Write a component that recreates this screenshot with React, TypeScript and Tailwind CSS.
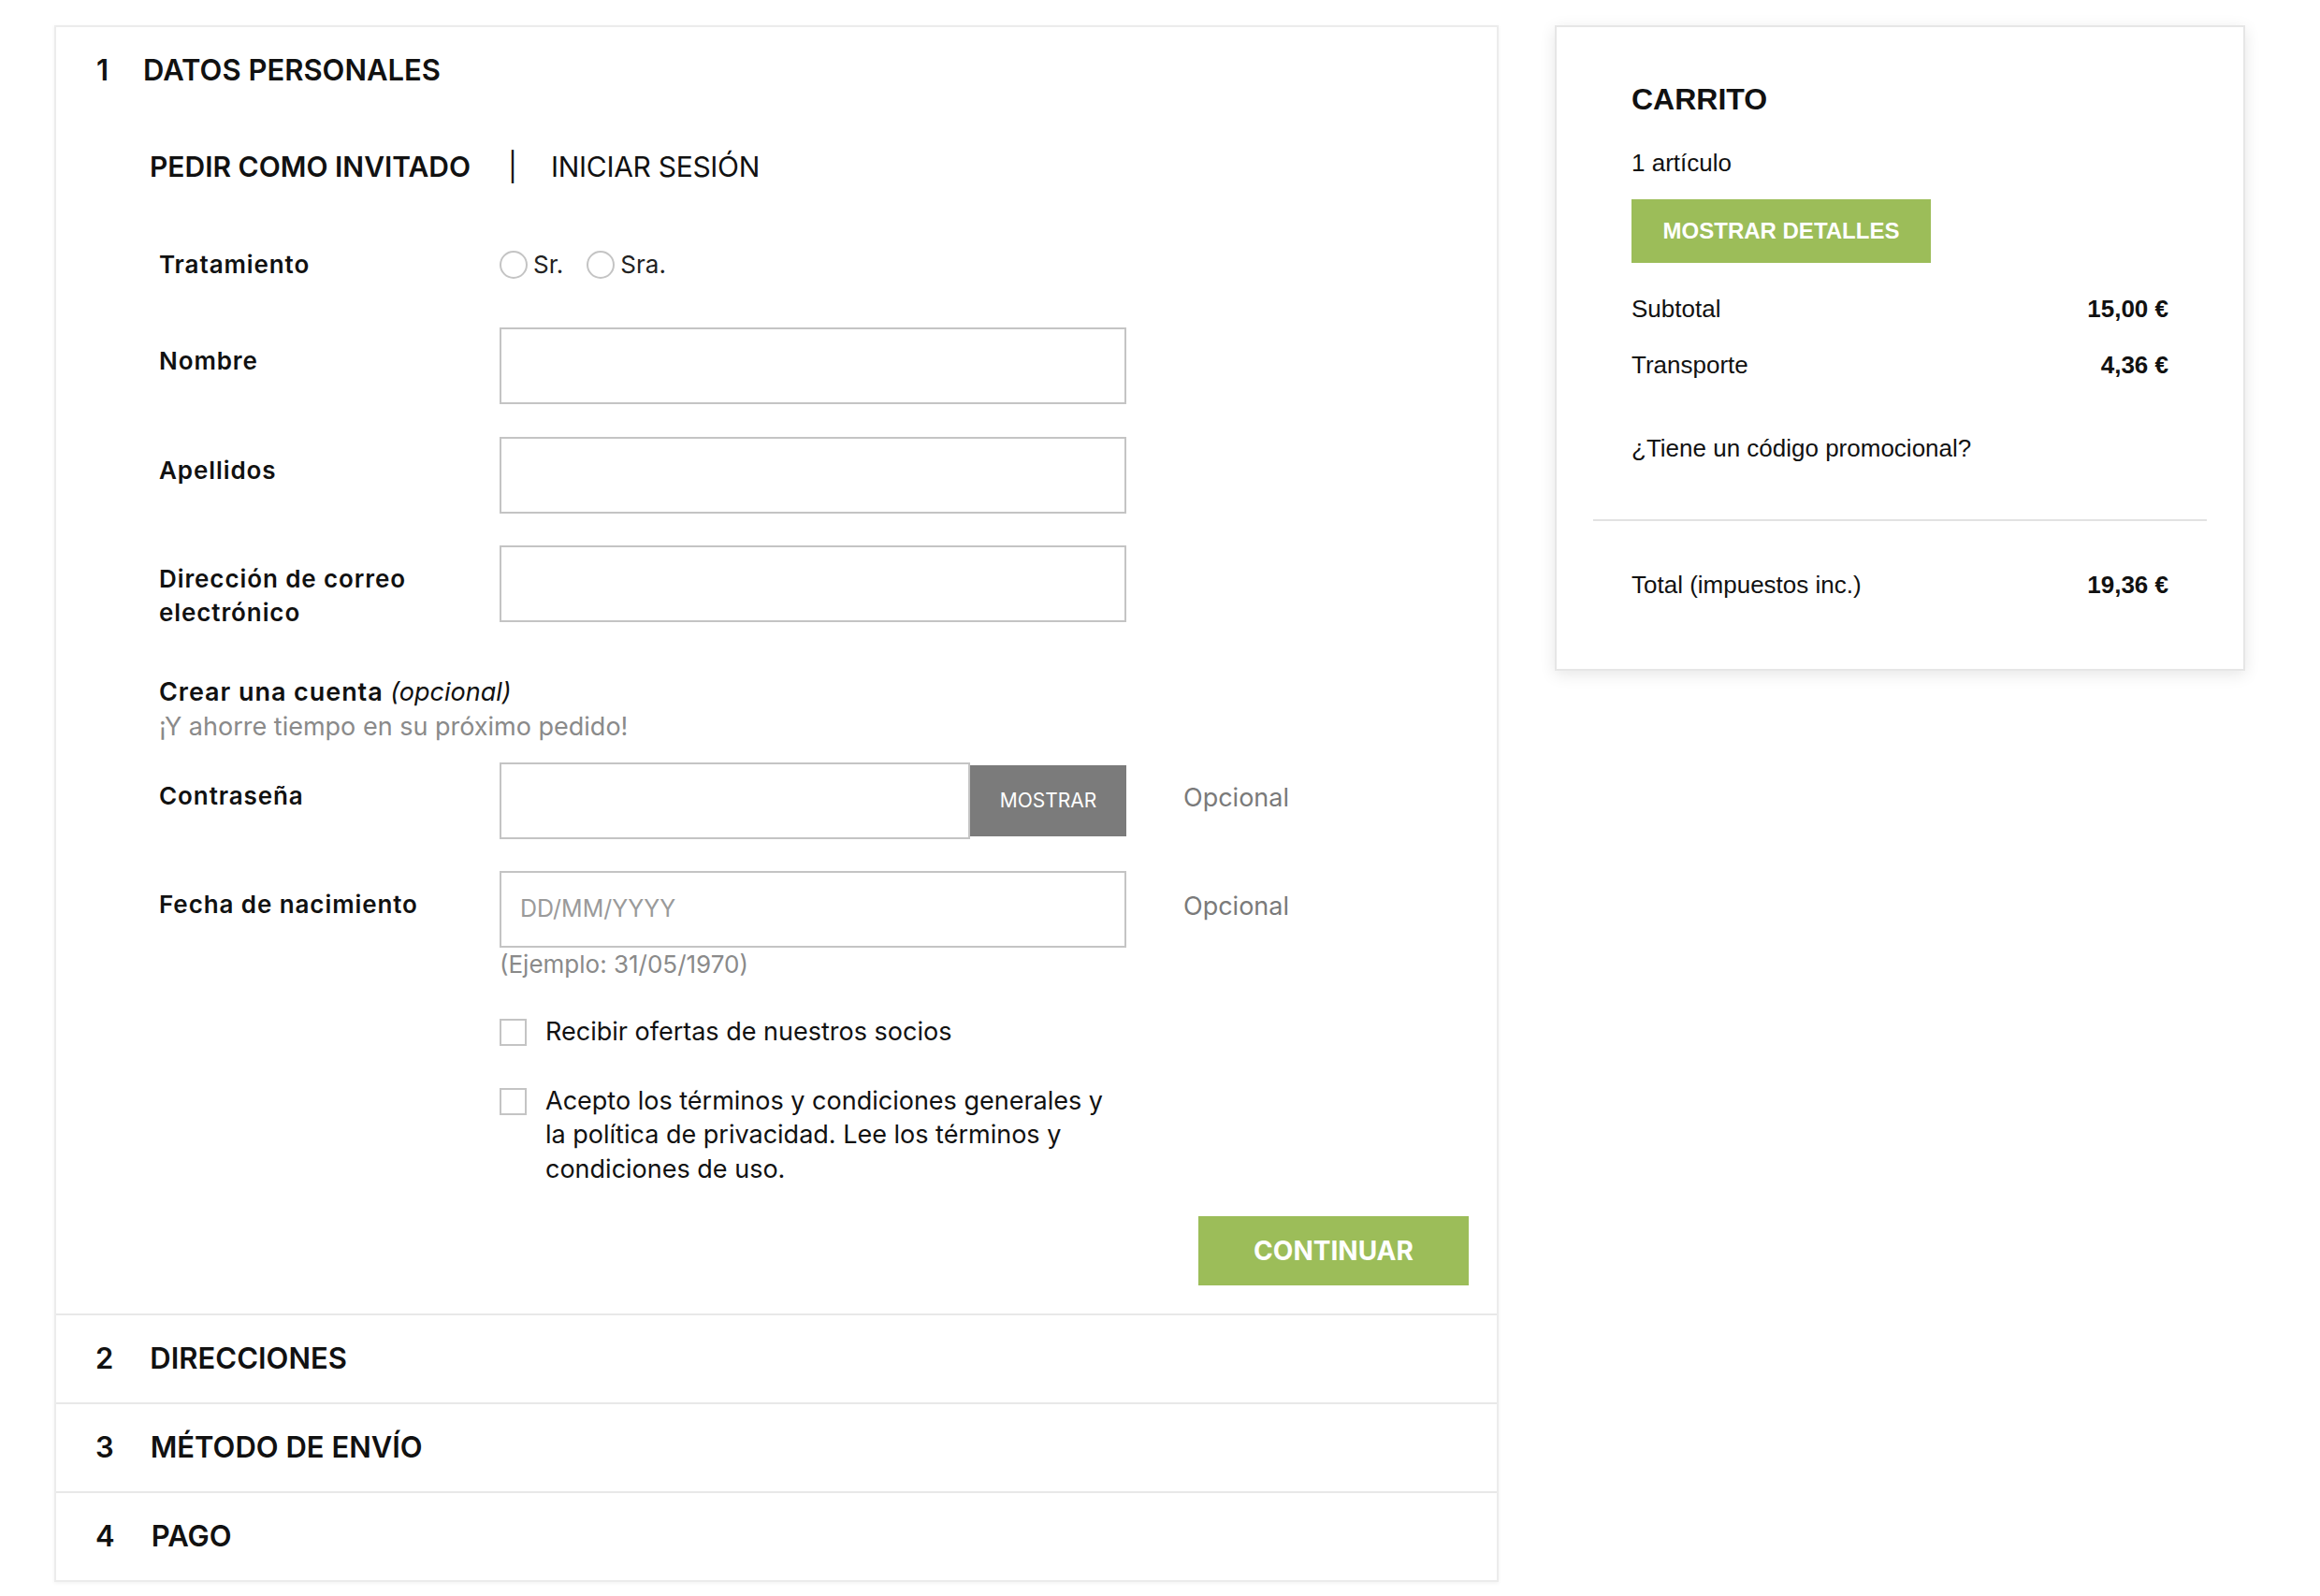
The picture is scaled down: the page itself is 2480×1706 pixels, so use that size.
import React from "react"

const green = "bg-[#9cbd59]"

function FieldLabel({ children }: { children: React.ReactNode }) {
  return (
    <div className="w-[364px] shrink-0 pt-[18px] text-[26px] font-semibold leading-[36px] tracking-[0.035em] text-[#111]">
      {children}
    </div>
  )
}

function TextInput({ placeholder }: { placeholder?: string }) {
  return (
    <div className="flex h-[82px] w-[670px] items-center border-2 border-[#c4c4c4] px-[20px] text-[25px] text-[#9a9a9a]">
      {placeholder}
    </div>
  )
}

function Radio({ label }: { label: string }) {
  return (
    <div className="flex items-center gap-[6px]">
      <span className="h-[30px] w-[30px] rounded-full border-2 border-[#c4c4c4]" />
      <span className="text-[26px] leading-[36px] text-[#222]">{label}</span>
    </div>
  )
}

function Checkbox({ children }: { children: React.ReactNode }) {
  return (
    <div className="flex items-start gap-[20px]">
      <span className="mt-[4px] h-[29px] w-[29px] shrink-0 border-2 border-[#c4c4c4]" />
      <div className="text-[27px] leading-[36.5px] text-[#111]">{children}</div>
    </div>
  )
}

function Step({ n, title }: { n: string; title: string }) {
  return (
    <div className="flex h-[95px] items-center gap-[39px] border-t-2 border-[#e8e8e8] pl-[42px] text-[31px] font-semibold text-[#111]">
      <span>{n}</span>
      <span>{title}</span>
    </div>
  )
}

function CartRow({ label, value }: { label: string; value: string }) {
  return (
    <div className="flex items-center justify-between leading-[36px]">
      <span>{label}</span>
      <span className="font-bold">{value}</span>
    </div>
  )
}

export default function App() {
  return (
    <div className="min-h-screen bg-white">
      <div className="flex items-start gap-[60px] pl-[58px] pt-[27px]">
        {/* checkout steps */}
        <div className="w-[1544px] border-2 border-[#ececec] bg-white shadow-[0_1px_4px_rgba(0,0,0,0.06)] font-['Inter',sans-serif]">
          <div className="pb-[30px]">
            <div className="flex items-center gap-[37px] pl-[43px] pt-[26px] text-[31px] font-semibold leading-[40px] text-[#111]">
              <span>1</span>
              <span>DATOS PERSONALES</span>
            </div>

            <div className="mt-[63px] flex items-center pl-[100px] text-[30px] leading-[40px] text-[#111]">
              <span className="font-semibold">PEDIR COMO INVITADO</span>
              <span className="ml-[40px]">|</span>
              <span className="ml-[36px] tracking-[-0.01em]">INICIAR SESIÓN</span>
            </div>

            <div className="pl-[110px]">
              <div className="mt-[49px] flex">
                <FieldLabel>Tratamiento</FieldLabel>
                <div className="flex items-center gap-[25px] pt-[18px]">
                  <Radio label="Sr." />
                  <Radio label="Sra." />
                </div>
              </div>

              <div className="mt-[49px] flex">
                <FieldLabel>Nombre</FieldLabel>
                <TextInput />
              </div>
              <div className="mt-[35px] flex">
                <FieldLabel>Apellidos</FieldLabel>
                <TextInput />
              </div>
              <div className="mt-[34px] flex">
                <FieldLabel>
                  Dirección de correo
                  <br />
                  electrónico
                </FieldLabel>
                <TextInput />
              </div>

              <div className="mt-[48px] text-[27px] leading-[37px]">
                <div className="text-[#111]">
                  <span className="font-semibold tracking-[0.035em]">Crear una cuenta</span>{" "}
                  <span className="italic">(opcional)</span>
                </div>
                <div className="text-[#8a8a8a]">¡Y ahorre tiempo en su próximo pedido!</div>
              </div>

              <div className="mt-[20px] flex">
                <FieldLabel>Contraseña</FieldLabel>
                <div className="flex w-[670px] items-center">
                  <div className="h-[82px] flex-1 border-2 border-[#c4c4c4]" />
                  <button type="button" className="h-[76px] w-[167px] bg-[#7b7b7b] text-[21px] uppercase text-white">
                    MOSTRAR
                  </button>
                </div>
                <div className="ml-[61px] pt-[20px] text-[27px] leading-[36px] text-[#7a7a7a]">Opcional</div>
              </div>

              <div className="mt-[34px] flex">
                <FieldLabel>Fecha de nacimiento</FieldLabel>
                <div>
                  <TextInput placeholder="DD/MM/YYYY" />
                  <div className="text-[26px] leading-[36px] text-[#8a8a8a]">(Ejemplo: 31/05/1970)</div>
                </div>
                <div className="ml-[61px] pt-[20px] text-[27px] leading-[36px] text-[#7a7a7a]">Opcional</div>
              </div>

              <div className="ml-[364px] mt-[36px] flex flex-col gap-[37px]">
                <Checkbox>Recibir ofertas de nuestros socios</Checkbox>
                <Checkbox>
                  Acepto los términos y condiciones generales y
                  <br />
                  la política de privacidad. Lee los términos y
                  <br />
                  condiciones de uso.
                </Checkbox>
              </div>
            </div>

            <div className="mt-[32px] flex justify-end pr-[30px]">
              <button type="button" className={`h-[74px] w-[289px] ${green} text-[28px] font-bold text-white`}>
                CONTINUAR
              </button>
            </div>
          </div>

          <Step n="2" title="DIRECCIONES" />
          <Step n="3" title="MÉTODO DE ENVÍO" />
          <Step n="4" title="PAGO" />
        </div>

        {/* cart */}
        <div className="w-[738px] border-2 border-[#e6e6e6] bg-white shadow-[0_4px_16px_rgba(0,0,0,0.10)] font-['Liberation_Sans',Arial,sans-serif] text-[26px] text-[#111]">
          <div className="px-[80px] pt-[57px]">
            <div className="text-[32px] font-bold leading-[40px]">CARRITO</div>
            <div className="mt-[30px] leading-[36px]">1 artículo</div>
            <button type="button" className={`mt-[21px] h-[68px] w-[320px] ${green} text-[24px] font-bold text-white`}>
              MOSTRAR DETALLES
            </button>
            <div className="mt-[31px]">
              <CartRow label="Subtotal" value="15,00 €" />
            </div>
            <div className="mt-[24px]">
              <CartRow label="Transporte" value="4,36 €" />
            </div>
            <div className="mt-[53px] leading-[36px]">¿Tiene un código promocional?</div>
          </div>
          <div className="mx-[39px] mt-[58px] border-t-2 border-[#e2e2e2]" />
          <div className="px-[80px] pb-[72px] pt-[50px]">
            <CartRow label="Total (impuestos inc.)" value="19,36 €" />
          </div>
        </div>
      </div>
    </div>
  )
}
